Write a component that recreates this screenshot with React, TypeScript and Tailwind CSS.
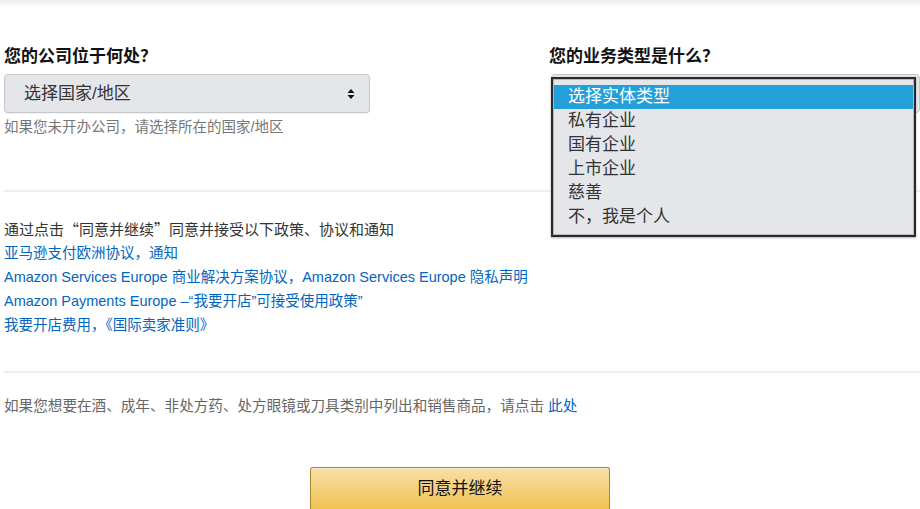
import React from 'react';

const font = { fontFamily: '"Liberation Sans", "Noto Sans CJK SC", sans-serif' };
const cjkFont = { fontFamily: '"Noto Sans CJK SC", "Liberation Sans", sans-serif' };

const options = ['选择实体类型', '私有企业', '国有企业', '上市企业', '慈善', '不，我是个人'];

const links = [
  '亚马逊支付欧洲协议，通知',
  'Amazon Services Europe 商业解决方案协议，Amazon Services Europe 隐私声明',
  'Amazon Payments Europe –“我要开店”可接受使用政策”',
  '我要开店费用，《国际卖家准则》',
];

const Arrows = () => (
  <svg width="8" height="12" viewBox="0 0 8 12" className="text-[#111]">
    <path d="M4 1 L7.5 5 H0.5 Z" fill="currentColor" />
    <path d="M4 11 L7.5 7 H0.5 Z" fill="currentColor" />
  </svg>
);

const App = () => {
  return (
    <div className="w-[920px] h-[509px] overflow-hidden bg-white" style={font}>
      {/* 상단 그림자 */}
      <div className="h-[8px] bg-linear-to-b from-[#ededed] to-white" />

      <div className="pl-[4px]">
        <div className="flex pt-[37px]">
          <div className="flex-1">
            <div className="text-[17px] leading-[24px] font-bold text-[#111]">您的公司位于何处？</div>
            <div className="mt-[5px] w-[366px] h-[39px] flex items-center justify-between pl-[19px] pr-[14px] bg-[#e4e6ea] border border-[#c6c7ca] rounded-[4px] shadow-[0_1px_0_rgba(0,0,0,0.05)]">
              <span className="text-[17px] text-[#333]">选择国家/地区</span>
              <Arrows />
            </div>
            <div className="mt-[4px] text-[14.5px] leading-[20px] text-[#777]">如果您未开办公司，请选择所在的国家/地区</div>
          </div>

          <div className="w-[371px] relative">
            <div className="text-[17px] leading-[24px] font-bold text-[#111]">您的业务类型是什么？</div>
            <div className="mt-[5px] h-[39px] ml-[2px] bg-[#e4e6ea] border border-[#c6c7ca] rounded-[4px]" />
            {/* 열린 목록 */}
            <div className="absolute left-[2px] top-[32px] w-[365px] border-2 border-[#2a2a2a] bg-[#e4e6ea] shadow-[0_1px_2px_rgba(0,0,0,0.3)]">
              <div className="border border-[#b5b7bb] pt-[5px] pb-[5px]">
                {options.map((opt, idx) => (
                  <div
                    key={idx}
                    className={
                      idx === 0
                        ? 'h-[24px] leading-[24px] pl-[14px] text-[17px] text-white bg-[#239fda]'
                        : 'h-[24px] leading-[24px] pl-[14px] text-[17px] text-[#333]'
                    }
                  >
                    {opt}
                  </div>
                ))}
              </div>
            </div>
          </div>
        </div>

        <div className="mt-[53px] h-[2px] bg-[#eeeeee]" />

        <div className="mt-[25px]">
          <div className="text-[15px] leading-[24px] text-[#333]" style={cjkFont}>
            通过点击“同意并继续”同意并接受以下政策、协议和通知
          </div>
          {links.map((el, idx) => (
            <div key={idx} className="text-[14.5px] leading-[24px] text-[#0066c0]">
              {el}
            </div>
          ))}
        </div>

        <div className="mt-[34px] h-[2px] bg-[#eeeeee]" />

        <div className="mt-[21px] text-[14.6px] leading-[24px] text-[#666]">
          如果您想要在酒、成年、非处方药、处方眼镜或刀具类别中列出和销售商品，请点击 <span className="text-[#0066c0]">此处</span>
        </div>

        <div className="mt-[49px] flex justify-center pr-[4px]">
          <button className="w-[300px] h-[44px] rounded-[3px] border border-[#a88734] border-b-[#9c7e31] bg-linear-to-b from-[#f7dfa5] to-[#f0c14b] text-[17px] text-[#111] shadow-[inset_0_1px_0_rgba(255,255,255,0.4)]">
            同意并继续
          </button>
        </div>
      </div>
    </div>
  );
};

export default App;
